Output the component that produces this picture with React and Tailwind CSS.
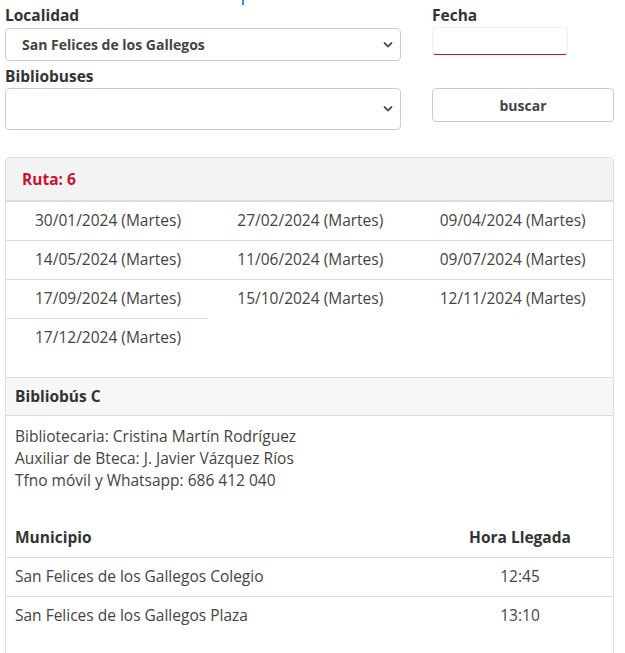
import React from "react";

function Chevron() {
  return (
    <svg width="10" height="7" viewBox="0 0 10 7" className="absolute right-[8px] top-1/2 -translate-y-1/2 pointer-events-none">
      <path d="M1.5 1.5 L5 5 L8.5 1.5" fill="none" stroke="#555" strokeWidth="1.8" strokeLinecap="round" strokeLinejoin="round" />
    </svg>
  );
}

const dates = [
  "30/01/2024", "27/02/2024", "09/04/2024",
  "14/05/2024", "11/06/2024", "09/07/2024",
  "17/09/2024", "15/10/2024", "12/11/2024",
  "17/12/2024",
];

export default function App() {
  return (
    <div className="relative w-[625px] min-h-[653px] bg-white text-[#333] pl-[5px] pr-[11px]" style={{ fontFamily: '"Open Sans", "Liberation Sans", sans-serif' }}>
      <div className="absolute left-[242px] top-0 w-[2px] h-[5px] bg-[#3b8fd6]" />
      <div className="grid grid-cols-[396px_182px] gap-x-[31px]">
        <div>
          <div className="pt-[5px] text-[15.5px] font-bold leading-[20px]">Localidad</div>
          <div className="relative mt-[3px]">
            <select className="appearance-none w-full h-[33px] border border-[#ccc] rounded-[4px] bg-white pl-[16px] text-[14px] font-bold text-[#444] outline-none">
              <option>San Felices de los Gallegos</option>
            </select>
            <Chevron />
          </div>
          <div className="mt-[5px] text-[15.5px] font-bold leading-[20px]">Bibliobuses</div>
          <div className="relative mt-[2px]">
            <select className="appearance-none w-full h-[42px] border border-[#ccc] rounded-[4px] bg-white pl-[16px] text-[14px] text-[#444] outline-none">
              <option></option>
            </select>
            <Chevron />
          </div>
        </div>
        <div>
          <div className="pt-[5px] text-[15.5px] font-bold leading-[20px]">Fecha</div>
          <div className="mt-[2px] w-[136px] h-[28px] border border-[#eee] border-b-[#d0103a] rounded-[4px]" />
          <div className="h-[33px]" />
          <button className="w-full h-[34px] border border-[#ccc] rounded-[4px] bg-white text-[14px] font-bold text-[#444]">buscar</button>
        </div>
      </div>

      <div className="mt-[27px] border border-[#ddd] rounded-t-[4px] min-h-[500px]">
        <div className="h-[44px] bg-[#f3f3f3] border-b-2 border-[#ddd] flex items-center pl-[16px] pt-[1px] text-[15.5px] font-bold text-[#c8102e] rounded-t-[4px]">
          Ruta: 6
        </div>
        <div className="grid grid-cols-3 pb-[20px]">
          {dates.map((d, i) => (
            <div key={d + i} className={`flex items-center pl-[29px] text-[15.5px] text-[#444] ${i >= 3 ? "h-[39px] border-t border-[#ddd]" : "h-[38px]"}`}>
              {d} (Martes)
            </div>
          ))}
        </div>
        <div className="h-[39px] bg-[#f7f7f7] border-y border-[#ddd] flex items-center pl-[9px] text-[15.5px] font-bold">
          Bibliobús C
        </div>
        <div className="pl-[9px] pt-[9px] text-[15.5px] leading-[22px] text-[#444]">
          <div>Bibliotecaria: Cristina Martín Rodríguez</div>
          <div>Auxiliar de Bteca: J. Javier Vázquez Ríos</div>
          <div>Tfno móvil y Whatsapp: 686 412 040</div>
        </div>
        <table className="w-full mt-[28px] border-collapse text-[15.5px]">
          <thead>
            <tr className="h-[38px] border-b border-[#ddd]">
              <th className="text-left pl-[9px] font-bold">Municipio</th>
              <th className="w-[186px] text-center font-bold">Hora Llegada</th>
            </tr>
          </thead>
          <tbody className="text-[#444]">
            <tr className="h-[39px] border-b border-[#ddd]">
              <td className="pl-[9px]">San Felices de los Gallegos Colegio</td>
              <td className="text-center">12:45</td>
            </tr>
            <tr className="h-[39px]">
              <td className="pl-[9px]">San Felices de los Gallegos Plaza</td>
              <td className="text-center">13:10</td>
            </tr>
          </tbody>
        </table>
      </div>
    </div>
  );
}
